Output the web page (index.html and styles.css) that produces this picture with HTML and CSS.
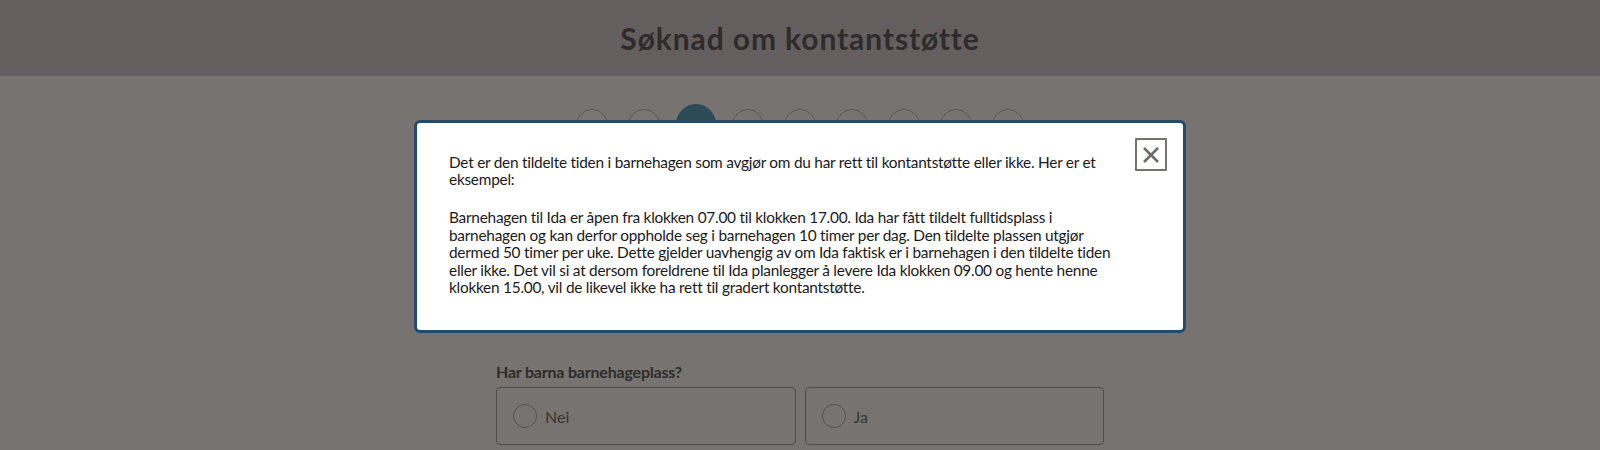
FILE: index.html
```html
<!DOCTYPE html>
<html lang="no">
<head>
<meta charset="utf-8">
<title>Søknad om kontantstøtte</title>
<link rel="stylesheet" href="styles.css">
</head>
<body>
<header class="header">
  <h1 class="title">Søknad om kontantstøtte</h1>
</header>
<main class="main">
  <ol class="stepper">
    <li class="step done"></li>
    <li class="step done"></li>
    <li class="step active"></li>
    <li class="step"></li>
    <li class="step"></li>
    <li class="step"></li>
    <li class="step"></li>
    <li class="step"></li>
    <li class="step"></li>
  </ol>
  <section class="content">
    <fieldset class="question">
      <legend class="question-label">Har barna barnehageplass?</legend>
      <div class="options">
        <label class="option"><span class="radio"></span><span class="option-text">Nei</span></label>
        <label class="option"><span class="radio"></span><span class="option-text">Ja</span></label>
      </div>
    </fieldset>
  </section>
</main>
<div class="overlay">
  <div class="modal" role="dialog">
    <button class="close" aria-label="Lukk">
      <svg width="18" height="18" viewBox="0 0 18 18"><path d="M2 2 L16 16 M16 2 L2 16" stroke="#6e6a68" stroke-width="2.6" fill="none"/></svg>
    </button>
    <div class="modal-body">
      <p>Det er den tildelte tiden i barnehagen som avgjør om du har rett til kontantstøtte eller ikke. Her er et eksempel:</p>
      <p>Barnehagen til Ida er åpen fra klokken 07.00 til klokken 17.00. Ida har fått tildelt fulltidsplass i barnehagen og kan derfor oppholde seg i barnehagen 10 timer per dag. Den tildelte plassen utgjør dermed 50 timer per uke. Dette gjelder uavhengig av om Ida faktisk er i barnehagen i den tildelte tiden eller ikke. Det vil si at dersom foreldrene til Ida planlegger å levere Ida klokken 09.00 og hente henne klokken 15.00, vil de likevel ikke ha rett til gradert kontantstøtte.</p>
    </div>
  </div>
</div>
</body>
</html>
```

FILE: styles.css
```css
* { box-sizing: border-box; }
html, body { margin: 0; padding: 0; }
body {
  font-family: "Lato", "Open Sans", sans-serif;
  background: #ece6e0;
  color: #5e5856;
  height: 450px;
  overflow: hidden;
}
.header {
  background: #c8bcbe;
  height: 76px;
  display: flex;
  align-items: center;
  justify-content: center;
}
.title {
  margin: 0;
  font-size: 30px;
  font-weight: 700;
  color: #5e5656;
  letter-spacing: 0.9px;
}
.main {
  display: flex;
  flex-direction: column;
  align-items: center;
}
.stepper {
  list-style: none;
  margin: 29px 0 0;
  padding: 0;
  display: flex;
  align-items: center;
  height: 38px;
}
.step {
  width: 52px;
  display: flex;
  justify-content: center;
}
.step::before {
  content: "";
  display: block;
  width: 30px;
  height: 30px;
  border-radius: 50%;
  border: 1px solid #b4aca8;
  margin-top: 1px;
}
.step.done::before { background: #f2ece8; }
.step.active::before {
  width: 38px;
  height: 38px;
  margin-top: 0;
  background: #5694aa;
  border-color: #5694aa;
}
.content {
  width: 608px;
  margin-top: 219px;
}
.question {
  border: 0;
  margin: 0;
  padding: 0;
}
.question-label {
  padding: 0;
  font-size: 16px;
  font-weight: 700;
  line-height: 20px;
  margin-bottom: 5px;
  letter-spacing: -0.2px;
  color: #5e5856;
}
.options {
  display: grid;
  grid-template-columns: 1fr 1fr;
  gap: 9px;
}
.option {
  display: flex;
  align-items: center;
  height: 58px;
  border: 1px solid #9e9692;
  border-radius: 4px;
  padding: 0 16px;
  gap: 8px;
}
.radio {
  width: 24px;
  height: 24px;
  border-radius: 50%;
  border: 1px solid #aaa29e;
}
.option-text {
  font-size: 16px;
  color: #746c68;
}
.overlay {
  position: fixed;
  inset: 0;
  background: rgba(0, 0, 0, 0.5);
  display: flex;
  justify-content: center;
  align-items: flex-start;
  padding-top: 120px;
}
.modal {
  position: relative;
  width: 772px;
  background: #fff;
  border: 3px solid #254b6b;
  border-radius: 6px;
  padding: 31px 32px 34px;
  color: #1a1a1a;
}
.modal-body {
  padding-right: 30px;
  font-size: 15.4px;
  letter-spacing: -0.25px;
  line-height: 17.4px;
}
.modal-body p { margin: 0 0 20.5px; }
.modal-body p:last-child { margin-bottom: 0; }
.close {
  position: absolute;
  top: 15px;
  right: 16px;
  width: 32px;
  height: 33px;
  padding: 0;
  background: #fff;
  border: 2px solid #77716e;
  border-radius: 1px;
  display: flex;
  align-items: center;
  justify-content: center;
  cursor: pointer;
}
```
